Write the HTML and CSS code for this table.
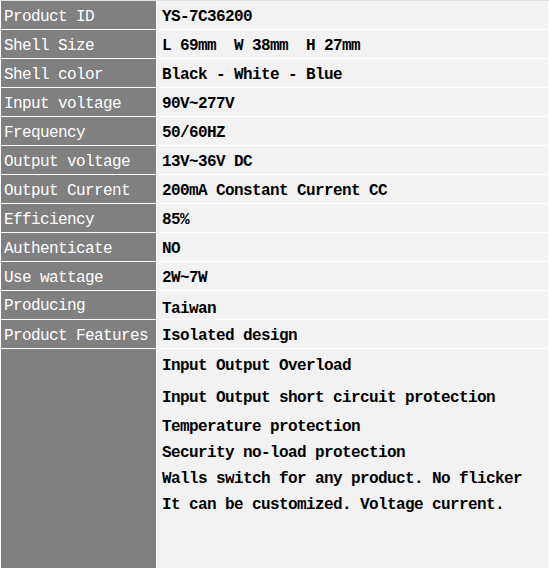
FILE: index.html
```html
<!DOCTYPE html>
<html>
<head>
<meta charset="utf-8">
<link rel="stylesheet" href="styles.css">
</head>
<body>
<div class="spec">
  <div class="k">Product ID</div><div class="v">YS-7C36200</div>
  <div class="k">Shell Size</div><div class="v">L 69mm&nbsp; W 38mm&nbsp; H 27mm</div>
  <div class="k">Shell color</div><div class="v">Black - White - Blue</div>
  <div class="k">Input voltage</div><div class="v">90V~277V</div>
  <div class="k">Frequency</div><div class="v">50/60HZ</div>
  <div class="k">Output voltage</div><div class="v">13V~36V DC</div>
  <div class="k">Output Current</div><div class="v">200mA Constant Current CC</div>
  <div class="k">Efficiency</div><div class="v">85%</div>
  <div class="k">Authenticate</div><div class="v">NO</div>
  <div class="k">Use wattage</div><div class="v">2W~7W</div>
  <div class="k k-up">Producing</div><div class="v v-down">Taiwan</div>
  <div class="k">Product Features</div><div class="v">Isolated design</div>
  <div class="k k-last"></div>
  <div class="v v-last">
    <div class="line">Input Output Overload</div>
    <div class="line gap-a">Input Output short circuit protection</div>
    <div class="line gap-b">Temperature protection</div>
    <div class="line">Security no-load protection</div>
    <div class="line">Walls switch for any product. No flicker</div>
    <div class="line">It can be customized. Voltage current.</div>
  </div>
</div>
</body>
</html>
```

FILE: styles.css
```css
html, body {
  margin: 0;
  padding: 0;
  overflow: hidden;
  background: #ffffff;
}

.spec {
  width: 549px;
  height: 568px;
  box-sizing: border-box;
  border-top: 1px solid #dde3ea;
  padding: 0 1px 0 1px;
  background: #ffffff;
  display: grid;
  grid-template-columns: 155px 391px;
  grid-template-rows: repeat(12, 28px) 1fr;
  column-gap: 1px;
  row-gap: 1px;
  font-family: "Liberation Mono", "DejaVu Sans Mono", monospace;
  font-size: 16px;
  letter-spacing: -0.6px;
  white-space: nowrap;
}

.k {
  background: #808080;
  color: #ffffff;
  box-sizing: border-box;
  padding: 3px 0 0 3px;
  line-height: 26px;
}

.v {
  background: #f2f2f2;
  color: #000000;
  font-weight: bold;
  box-sizing: border-box;
  padding: 3px 0 0 5px;
  line-height: 26px;
}

.k-up {
  padding-top: 2px;
}

.v-down {
  padding-top: 5px;
}

.v-last {
  padding-top: 4px;
}

.line {
  line-height: 26px;
}

.gap-a {
  margin-top: 6px;
}

.gap-b {
  margin-top: 3px;
}
```
